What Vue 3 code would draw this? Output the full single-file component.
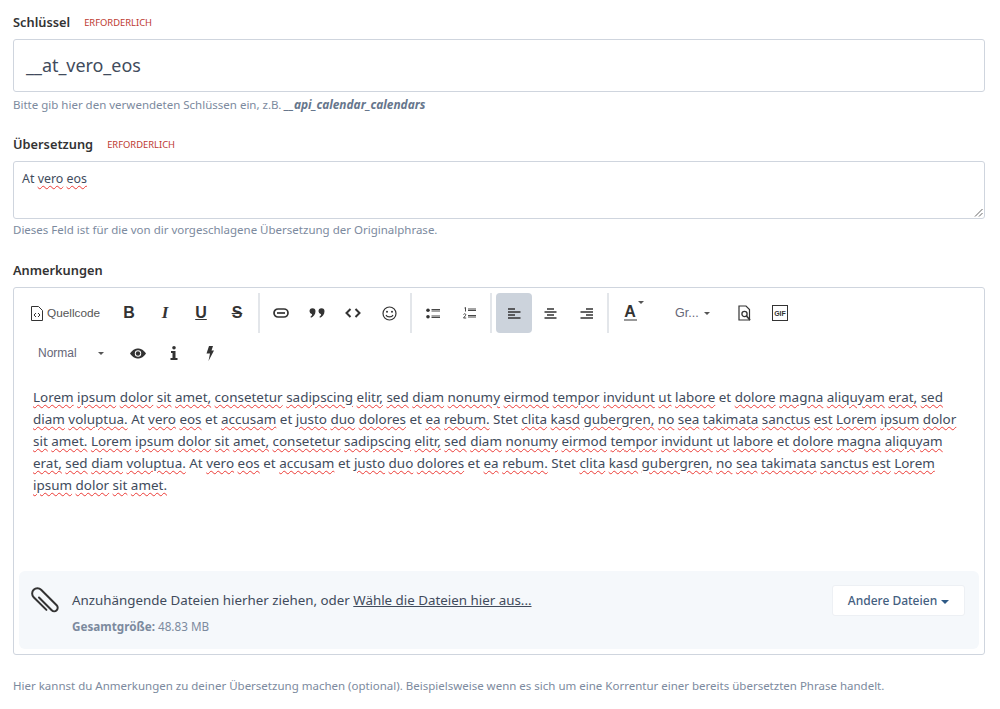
<template>
  <div class="page">
    <div class="field first">
      <div class="label-row">
        <label>Schlüssel</label>
        <span class="req">Erforderlich</span>
      </div>
      <div class="key-input">__at_vero_eos</div>
      <p class="hint">Bitte gib hier den verwendeten Schlüssen ein, z.B. <b><i>__api_calendar_calendars</i></b></p>
    </div>

    <div class="field">
      <div class="label-row">
        <label>Übersetzung</label>
        <span class="req">Erforderlich</span>
      </div>
      <div class="textarea">
        At <span class="typo">vero</span> <span class="typo">eos</span>
        <svg class="grip" width="9" height="9" viewBox="0 0 9 9"><path d="M8.500 1 1 8.500M8.500 5 5 8.500" stroke="#666" stroke-width="1" fill="none" /></svg>
      </div>
      <p class="hint tight">Dieses Feld ist für die von dir vorgeschlagene Übersetzung der Originalphrase.</p>
    </div>

    <div class="field">
      <div class="label-row">
        <label>Anmerkungen</label>
      </div>
      <div class="editor">
        <div class="toolbar">
          <button class="tool source">
            <svg width="12" height="15" viewBox="0 0 12 15"><path d="M.5.500h7l4 4v10H.5z" fill="none" stroke="#333" stroke-width="1" /><path d="M5 7 3 9l2 2M7 7l2 2-2 2" fill="none" stroke="#333" stroke-width="1" /></svg>
            <span>Quellcode</span>
          </button>
          <button class="tool"><b class="glyph">B</b></button>
          <button class="tool"><b class="glyph serif">I</b></button>
          <button class="tool"><span class="glyph under">U</span></button>
          <button class="tool"><span class="glyph strike">S</span></button>
          <span class="sep"></span>
          <button class="tool">
            <svg width="16" height="10" viewBox="0 0 16 10"><rect x="1" y="1" width="14" height="8" rx="4" fill="none" stroke="#333" stroke-width="1.700" /><path d="M4 5h8" stroke="#333" stroke-width="1.700" /></svg>
          </button>
          <button class="tool">
            <svg width="16" height="10" viewBox="0 0 16 10"><path d="M.5 3.300a3 3 0 0 1 6 0c0 3-2 5.400-4.500 6.500l-.6-1c1-.6 1.600-1.500 1.700-2.600A3 3 0 0 1 .5 3.300zM9.500 3.300a3 3 0 0 1 6 0c0 3-2 5.400-4.500 6.500l-.6-1c1-.6 1.600-1.500 1.700-2.600A3 3 0 0 1 9.500 3.300z" fill="#333" /></svg>
          </button>
          <button class="tool">
            <svg width="16" height="10" viewBox="0 0 16 10"><path d="M5.500 1 1.500 5l4 4M10.500 1l4 4-4 4" fill="none" stroke="#333" stroke-width="2" /></svg>
          </button>
          <button class="tool">
            <svg width="15" height="15" viewBox="0 0 15 15"><circle cx="7.500" cy="7.500" r="6.500" fill="none" stroke="#333" stroke-width="1.200" /><circle cx="5" cy="5.800" r="1" fill="#333" /><circle cx="10" cy="5.800" r="1" fill="#333" /><path d="M4 9c1 2.500 6 2.500 7 0" fill="none" stroke="#333" stroke-width="1.200" /></svg>
          </button>
          <span class="sep"></span>
          <button class="tool">
            <svg width="14" height="11" viewBox="0 0 14 11"><circle cx="2" cy="2.200" r="1.800" fill="#333" /><circle cx="2" cy="8.800" r="1.800" fill="#333" /><path d="M5.500 1.500H14M5.500 3H14M5.500 8H14M5.500 9.500H14" stroke="#333" stroke-width=".9" /></svg>
          </button>
          <button class="tool">
            <svg width="13" height="12" viewBox="0 0 13 12"><path d="M1.500 1 2.500.5v4M.5 7.500c1-1.500 3-.5 2 1L.5 11H3.200" fill="none" stroke="#333" stroke-width=".9" /><path d="M5 2h8M5 3.500h8M5 8.500h8M5 10h8" stroke="#333" stroke-width=".9" /></svg>
          </button>
          <span class="sep wide"></span>
          <button class="tool on">
            <svg width="13" height="11" viewBox="0 0 13 11"><path d="M0 1h7M0 4h12.500M0 7h7M0 10h12.500" stroke="#333" stroke-width="1.700" /></svg>
          </button>
          <button class="tool">
            <svg width="13" height="11" viewBox="0 0 13 11"><path d="M3 1h7M.5 4h12M3 7h7M.5 10h12" stroke="#333" stroke-width="1.700" /></svg>
          </button>
          <button class="tool">
            <svg width="13" height="11" viewBox="0 0 13 11"><path d="M6 1h7M.5 4H13M6 7h7M.5 10H13" stroke="#333" stroke-width="1.700" /></svg>
          </button>
          <span class="sep"></span>
          <button class="tool color">
            <b class="big-a">A</b>
            <span class="a-line"></span>
            <span class="caret small"></span>
          </button>
          <button class="drop gr">Gr... <span class="caret"></span></button>
          <button class="tool">
            <svg width="13" height="16" viewBox="0 0 13 16"><path d="M1 1h7l3.500 3.500V15H1z" fill="none" stroke="#333" stroke-width="1.200" /><circle cx="6.500" cy="9" r="2.600" fill="none" stroke="#333" stroke-width="1.300" /><path d="m8.500 11 3.500 4" stroke="#333" stroke-width="1.600" /></svg>
          </button>
          <button class="tool">
            <svg width="16" height="16" viewBox="0 0 16 16"><rect x=".5" y=".5" width="15" height="15" fill="none" stroke="#333" stroke-width="1" /><text x="8" y="10.800" text-anchor="middle" class="gif">GIF</text></svg>
          </button>
        </div>
        <div class="toolbar second">
          <button class="drop normal">Normal <span class="caret"></span></button>
          <button class="tool">
            <svg width="16" height="11" viewBox="0 0 16 11"><path d="M0 5.500C3 1.200 5.500.5 8 .5s5 .7 8 5c-3 4.300-5.500 5-8 5s-5-.7-8-5z" fill="#333" /><circle cx="8" cy="5.500" r="3.200" fill="#fff" /><circle cx="8" cy="5.500" r="2.200" fill="#333" /></svg>
          </button>
          <button class="tool">
            <svg width="8" height="14" viewBox="0 0 8 14"><circle cx="4" cy="1.800" r="1.800" fill="#333" /><path d="M1 5h4.500v7H7.500v2H.5v-2h2V7H1z" fill="#333" /></svg>
          </button>
          <button class="tool">
            <svg width="8" height="15" viewBox="0 0 8 15"><path d="M3 0h4L5.500 4.500H8L2.500 15l1.500-7.500H.5z" fill="#333" /></svg>
          </button>
        </div>
        <div class="content">
          <template v-for="(w, i) in words" :key="i"><span :class="{ typo: w.bad }">{{ w.text }}</span>{{ ' ' }}</template>
        </div>
        <div class="attach">
          <svg class="clip" width="28" height="28" viewBox="0 0 28 28"><path transform="rotate(-45 14 14)" d="M11.500 8V26a3.500 3.500 0 0 0 7 0V4a5.250 5.250 0 0 0-10.500 0V22" fill="none" stroke="#333" stroke-width="2" stroke-linecap="round" /></svg>
          <div class="attach-text">
            <div>Anzuhängende Dateien hierher ziehen, oder <a>Wähle die Dateien hier aus...</a></div>
            <div class="total"><b>Gesamtgröße:</b> 48.83 MB</div>
          </div>
          <button class="more">Andere Dateien<span class="caret blue"></span></button>
        </div>
      </div>
      <p class="hint last">Hier kannst du Anmerkungen zu deiner Übersetzung machen (optional). Beispielsweise wenn es sich um eine Korrentur einer bereits übersetzten Phrase handelt.</p>
    </div>
  </div>
</template>

<script setup>
const sentence = 'Lorem ipsum dolor sit amet, consetetur sadipscing elitr, sed diam nonumy eirmod tempor invidunt ut labore et dolore magna aliquyam erat, sed diam voluptua. At vero eos et accusam et justo duo dolores et ea rebum. Stet clita kasd gubergren, no sea takimata sanctus est Lorem ipsum dolor sit amet.'
// the words the spell checker lets through
const okWords = ['et', 'At', 'Stet']

const words = `${sentence} ${sentence}`.split(' ').map((text) => ({
  text,
  bad: !okWords.includes(text),
}))
</script>

<style>
body {
  background: #fff;
}
</style>

<style scoped>
.page {
  padding: 13px 15px 0 13px;
  font-family: "Noto Sans", sans-serif;
  color: #414b5c;
  font-size: 13px;
}

.field {
  margin-bottom: 23px;
}

.field.first {
  margin-bottom: 22px;
}

.label-row {
  display: flex;
  align-items: center;
  gap: 14px;
  height: 18px;
  margin-bottom: 8px;
}

label {
  font-weight: 600;
  font-size: 12.8px;
  color: #333;
}

.req {
  font-size: 9.4px;
  text-transform: uppercase;
  color: #bd3a30;
}

.key-input {
  height: 53px;
  box-sizing: border-box;
  border: 1px solid #cfd5de;
  border-radius: 3px;
  padding: 0 12px 2px;
  display: flex;
  align-items: center;
  font-size: 17.9px;
}

.textarea {
  position: relative;
  height: 58px;
  box-sizing: border-box;
  border: 1px solid #cfd5de;
  border-radius: 3px;
  padding: 7px 8px;
  font-size: 12.4px;
  line-height: 20px;
}

.grip {
  position: absolute;
  right: 1px;
  bottom: 1px;
}

.hint {
  margin: 4px 0 0;
  font-size: 11.5px;
  line-height: 16px;
  color: #7c8a9e;
}

.hint.tight {
  margin-top: 3px;
}

.hint b {
  color: #66768c;
  font-size: 11.9px;
}

.hint.last {
  margin-top: 23px;
}

.typo {
  text-decoration: underline wavy #ec3b36 1px;
  text-underline-offset: 2px;
}

.editor {
  height: 368px;
  box-sizing: border-box;
  border: 1px solid #cfd5de;
  border-radius: 3px;
  padding: 5px;
  display: flex;
  flex-direction: column;
}

.toolbar {
  display: flex;
  align-items: center;
  height: 40px;
  padding-left: 12px;
}

.toolbar.second {
  padding-left: 19px;
}

.tool {
  width: 36px;
  height: 40px;
  border: 0;
  border-radius: 4px;
  background: none;
  padding: 0;
  display: flex;
  align-items: center;
  justify-content: center;
  position: relative;
  color: #333;
}

.tool.on {
  background: #ccd3dc;
}

.tool.source {
  width: 80px;
  justify-content: flex-start;
  gap: 4px;
  font: 11.8px "Liberation Sans", sans-serif;
  color: #555;
}

.glyph {
  font: 700 16px "Liberation Sans", sans-serif;
}

.serif {
  font-family: "Liberation Serif", serif;
  font-style: italic;
  font-size: 17px;
}

.under {
  text-decoration: underline;
}

.strike {
  text-decoration: line-through;
}

.sep {
  width: 2px;
  height: 40px;
  background: #e3e6ea;
  margin: 0 3px;
}

.sep.wide {
  margin-right: 4px;
}

.big-a {
  font: 700 16px "Liberation Sans", sans-serif;
  margin-top: -3px;
}

.a-line {
  position: absolute;
  left: 12px;
  right: 11px;
  top: 26px;
  height: 2px;
  background: #999;
}

.caret {
  display: inline-block;
  border: 3px solid transparent;
  border-top-color: #555;
  border-bottom: 0;
  vertical-align: middle;
  margin-left: 2px;
}

.caret.small {
  position: absolute;
  top: 8px;
  right: 4px;
}

.drop {
  border: 0;
  background: none;
  padding: 0;
  font: 12px "Liberation Sans", sans-serif;
  color: #667;
}

.drop.gr {
  width: 78px;
  font-size: 12.5px;
  text-align: left;
  padding-left: 27px;
  box-sizing: border-box;
}

.drop.normal {
  width: 82px;
  box-sizing: border-box;
  display: flex;
  align-items: center;
  justify-content: space-between;
  padding-right: 16px;
}

.content {
  flex: 1;
  padding: 13px 10px 0 14px;
  font-size: 13.45px;
  line-height: 22px;
}

.attach {
  height: 78px;
  background: #f5f8fb;
  border-radius: 6px;
  display: flex;
  align-items: flex-start;
  padding: 0 14px 0 12px;
  gap: 13px;
}

.clip {
  margin-top: 15px;
  overflow: visible;
}

.attach-text {
  flex: 1;
  padding-top: 16px;
  line-height: 26px;
  font-size: 13.35px;
}

.attach a {
  text-decoration: underline;
}

.total {
  font-size: 11.7px;
  color: #7c8a9e;
}

.more {
  margin-top: 14px;
  height: 31px;
  width: 133px;
  border: 1px solid #edf0f4;
  border-radius: 3px;
  background: #fff;
  color: #44607f;
  font: 500 12px "Noto Sans", sans-serif;
}

.caret.blue {
  border-width: 4px;
  border-bottom: 0;
  border-top-color: #2f5a86;
  margin-left: 4px;
}

.gif {
  font: 700 7px "Liberation Sans", sans-serif;
  fill: #333;
}
</style>
